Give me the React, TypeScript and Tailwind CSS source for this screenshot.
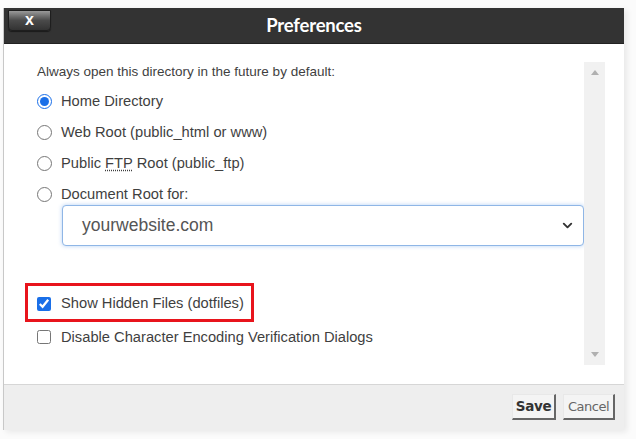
import { ChevronDown } from "lucide-react";

function Radio({ label, checked }: { label: React.ReactNode; checked?: boolean }) {
  return (
    <label className="flex h-[20px] items-center gap-[9px]">
      <input
        type="radio"
        name="dir"
        defaultChecked={checked}
        className="m-0 h-[15px] w-[15px] accent-[#1a6fe8]"
      />
      <span>{label}</span>
    </label>
  );
}

function Check({ label, checked }: { label: string; checked?: boolean }) {
  return (
    <label className="flex h-[20px] items-center gap-[10px]">
      <input
        type="checkbox"
        defaultChecked={checked}
        className="m-0 h-[14px] w-[14px] accent-[#1a6fe8]"
      />
      <span>{label}</span>
    </label>
  );
}

export default function App() {
  return (
    <div className="h-[439px] w-[636px] bg-[#fbfbfb] pl-[3px] pt-[8px] font-['Liberation_Sans',Arial,sans-serif]">
      <div className="w-[621px] border-l border-[#c8c8c8] bg-white shadow-[3px_2px_6px_rgba(0,0,0,0.08)]">
        {/* title bar */}
        <div className="grid h-[36px] grid-cols-[1fr_auto_1fr] items-start border-b border-[#222] bg-[#333333]">
          <div className="pl-[4px] pt-[2px]">
            <button className="flex h-[21px] w-[43px] items-center justify-center rounded-b-[4px] border border-[#1e1e1e] bg-gradient-to-b from-[#9a9a9a] via-[#4a4a4a] to-[#333] pb-[2px] text-[16px] font-bold leading-none text-white shadow-[0_1px_1px_rgba(0,0,0,0.5)]">
              x
            </button>
          </div>
          <div className="self-center font-['Lato',sans-serif] text-[18.5px] font-bold tracking-[-0.2px] text-white">
            Preferences
          </div>
          <div />
        </div>

        {/* body */}
        <div className="flex h-[340px]">
          <div className="flex-1 pl-[33px] pt-[18px] text-[14.7px] text-[#3f3f3f]">
            <div className="flex h-[20px] items-center text-[13.5px]">
              Always open this directory in the future by default:
            </div>
            <div className="mt-[9px] flex flex-col gap-[11px]">
              <Radio label="Home Directory" checked />
              <Radio label="Web Root (public_html or www)" />
              <Radio
                label={
                  <>
                    Public{" "}
                    <abbr className="underline decoration-dotted underline-offset-2">FTP</abbr>{" "}
                    Root (public_ftp)
                  </>
                }
              />
              <Radio label="Document Root for:" />
            </div>
            <div className="ml-[25px] mt-[1px] flex h-[41px] w-[522px] items-center justify-between rounded-[4px] border border-[#8fb6e6] bg-white pl-[19px] pr-[8px] shadow-[0_0_4px_rgba(90,150,230,0.45)]">
              <span className="text-[17.5px] text-[#555]">yourwebsite.com</span>
              <ChevronDown size={15} strokeWidth={3} className="text-[#333]" />
            </div>

            <div className="ml-[-12px] mt-[37px] flex h-[39px] w-[229px] items-center border-[3px] border-[#e8141c] pl-[9px] pt-[2px]">
              <Check label="Show Hidden Files (dotfiles)" checked />
            </div>
            <div className="mt-[5px]">
              <Check label="Disable Character Encoding Verification Dialogs" />
            </div>
          </div>

          {/* scrollbar */}
          <div className="mr-[19px] mt-[18px] flex h-[303px] w-[21px] flex-col items-center justify-between bg-[#f1f1f1] py-[8px]">
            <svg width="8" height="5" viewBox="0 0 8 5">
              <path d="M0 5 L4 0 L8 5 Z" fill="#b0b0b0" />
            </svg>
            <svg width="8" height="5" viewBox="0 0 8 5">
              <path d="M0 0 L4 5 L8 0 Z" fill="#b0b0b0" />
            </svg>
          </div>
        </div>

        {/* footer */}
        <div className="flex h-[46px] justify-end gap-[7px] border-t border-[#d6d6d6] bg-[#eeeeee] pr-[9px] pt-[9px] font-['DejaVu_Sans',Verdana,sans-serif] text-[13.5px]">
          <button className="h-[26px] w-[44px] border border-b-2 border-r-2 border-b-[#666] border-l-[#e8e8e8] border-r-[#666] border-t-[#e8e8e8] bg-[#f4f4f4] font-bold tracking-[-0.3px] text-[#333]">
            Save
          </button>
          <button className="h-[26px] w-[52px] border border-b-2 border-r-2 border-b-[#666] border-l-[#e8e8e8] border-r-[#666] border-t-[#e8e8e8] bg-[#f4f4f4] text-[13px] tracking-[-0.5px] text-[#666]">
            Cancel
          </button>
        </div>
      </div>
    </div>
  );
}
